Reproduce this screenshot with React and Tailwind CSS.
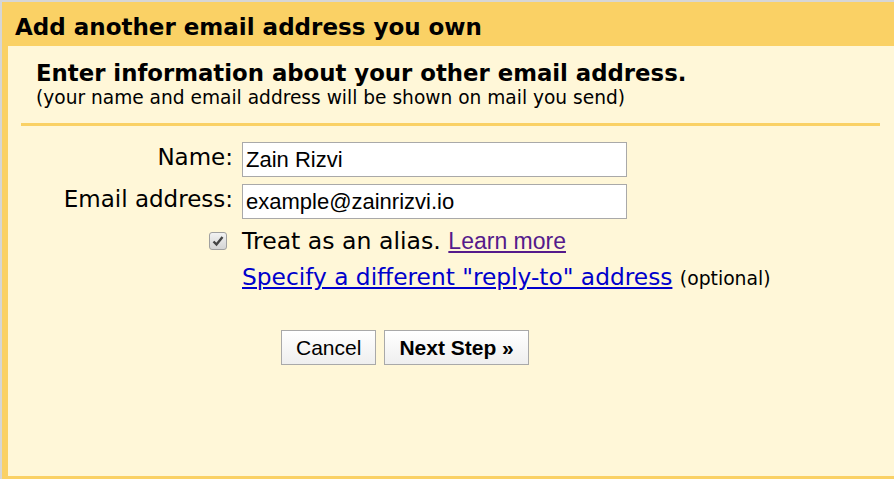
export default function App() {
  return (
    <div className="w-[894px] h-[479px] overflow-hidden bg-[#d6d6d6] pt-[2px] pl-[2px]">
      <div className="h-full bg-[#fad165] pl-[6px] pb-[3px] flex flex-col">
        <div className="h-[44px] pt-[11px] pl-[7px] text-[23px] leading-[28px] font-bold text-black font-['DejaVu_Sans',sans-serif] whitespace-nowrap">
          Add another email address you own
        </div>
        <div className="flex-1 bg-[#fff7d8] font-['DejaVu_Sans',sans-serif] text-black">
          <div className="pl-[28px] pt-[14px]">
            <div className="text-[22.8px] font-bold leading-[27px] whitespace-nowrap">
              Enter information about your other email address.
            </div>
            <div className="text-[18.6px] leading-[22px] whitespace-nowrap">
              (your name and email address will be shown on mail you send)
            </div>
          </div>
          <div className="ml-[13px] mr-[14px] mt-[14px] h-[3px] bg-[#fad165]" />
          <div className="grid grid-cols-[225px_auto] gap-x-[9px] mt-[16px]">
            <div className="h-[35px] text-right text-[23px] leading-[30px]">Name:</div>
            <div className="w-[385px] h-[35px] border border-[#a9a9a9] bg-white flex items-center px-[3px] text-[22px] font-['Liberation_Sans',Arial,sans-serif]">
              Zain Rizvi
            </div>
            <div className="h-[35px] mt-[7px] text-right text-[23px] leading-[30px] whitespace-nowrap">
              Email address:
            </div>
            <div className="w-[385px] h-[35px] mt-[7px] border border-[#a9a9a9] bg-white flex items-center px-[3px] text-[22px] font-['Liberation_Sans',Arial,sans-serif]">
              example@zainrizvi.io
            </div>
            <div className="mt-[8px] flex justify-end pr-[6px] pt-[5px]">
              <div className="w-[18px] h-[18px] rounded-[3px] border border-[#a0a0a0] bg-gradient-to-b from-[#f2f2f2] to-[#d4d4d4] flex items-center justify-center">
                <svg width="12" height="12" viewBox="0 0 12 12">
                  <path d="M1.5 6.5 L4.5 9.5 L10.5 2" fill="none" stroke="#444" strokeWidth="2.4" />
                </svg>
              </div>
            </div>
            <div className="mt-[8px] text-[23.6px] leading-[28px] whitespace-nowrap">
              Treat as an alias.{" "}
              <a href="#" className="text-[#551a8b] underline text-[23px] font-['Liberation_Sans',Arial,sans-serif]">
                Learn more
              </a>
            </div>
            <div />
            <div className="mt-[8px] text-[23.3px] leading-[28px] whitespace-nowrap">
              <a href="#" className="text-[#0000cc] underline">
                Specify a different "reply-to" address
              </a>{" "}
              <span className="text-[18.8px]">(optional)</span>
            </div>
          </div>
          <div className="flex gap-[8px] pl-[273px] mt-[37px]">
            <button className="h-[35px] px-[14px] border border-[#a9a9a9] bg-gradient-to-b from-white to-[#efefef] text-[21px] font-['Liberation_Sans',Arial,sans-serif]">
              Cancel
            </button>
            <button className="h-[35px] px-[14px] border border-[#a9a9a9] bg-gradient-to-b from-white to-[#efefef] text-[21px] font-bold font-['Liberation_Sans',Arial,sans-serif]">
              Next Step »
            </button>
          </div>
        </div>
      </div>
    </div>
  );
}
